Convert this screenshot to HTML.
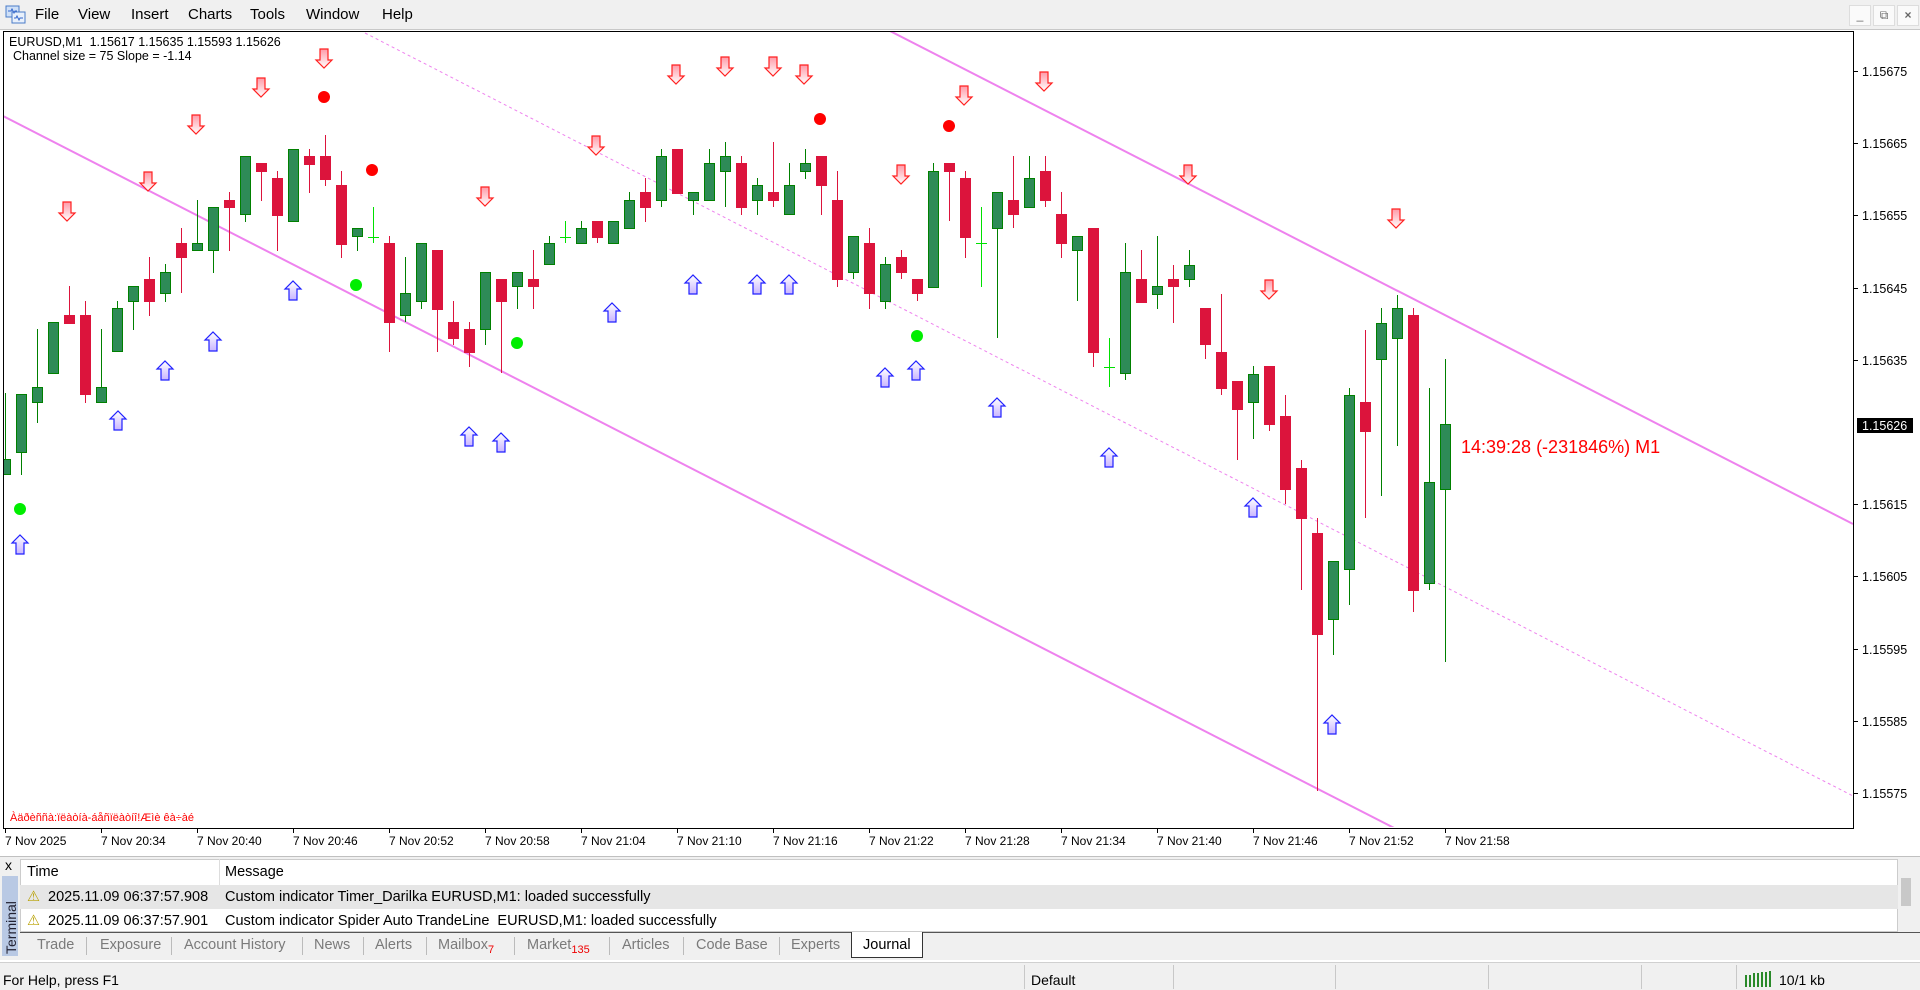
<!DOCTYPE html>
<html><head><meta charset="utf-8"><style>
*{margin:0;padding:0;box-sizing:border-box}
body{width:1920px;height:990px;overflow:hidden;background:#fff;font-family:"Liberation Sans",sans-serif;position:relative}
.abs{position:absolute}
#menu{left:0;top:0;width:1920px;height:30px;background:#f0f0f0;border-bottom:1px solid #c8c8c8}
#menu span{position:absolute;top:6px;font-size:15px;color:#000}
.wb{position:absolute;top:5px;width:22px;height:21px;background:#fafafa;border:1px solid #ddd;font-size:12px;color:#666;text-align:center;line-height:19px}
#term{left:0;top:856px;width:1920px;height:104px;background:#f0f0f0}
.tab{position:absolute;top:937px;font-size:14.5px;color:#7a7a7a}
.sep{position:absolute;top:937px;width:1px;height:18px;background:#bbb}
#status{left:0;top:962px;width:1920px;height:28px;background:#f0f0f0;border-top:1px solid #d0d0d0}
.ss{position:absolute;top:2px;width:1px;height:24px;background:#c8c8c8}
.tx{font-size:14.5px}
</style></head><body>
<div id="menu" class="abs">
<svg class="abs" style="left:5px;top:5px" width="22" height="20"><rect x="1" y="1" width="13" height="11" fill="#cfe0f7" stroke="#4a7bc8"/><rect x="7" y="7" width="13" height="11" fill="#e8f0fb" stroke="#4a7bc8"/><path d="M3 6h3l1-2 2 4 1-2h2M9 13h2l1-2 2 4 1-2h3" stroke="#3366cc" fill="none"/></svg>
<span style="left:35px">File</span><span style="left:78px">View</span><span style="left:131px">Insert</span><span style="left:188px">Charts</span><span style="left:250px">Tools</span><span style="left:306px">Window</span><span style="left:382px">Help</span>
<div class="wb" style="left:1849px">_</div><div class="wb" style="left:1873px">&#10697;</div><div class="wb" style="left:1897px;font-weight:bold">×</div>
</div>
<svg id="ch" class="abs" style="left:0;top:0" width="1920" height="856"></svg>
<div class="abs" style="left:9px;top:35px;font-size:12.5px;white-space:pre">EURUSD,M1  1.15617 1.15635 1.15593 1.15626</div>
<div class="abs" style="left:13px;top:49px;font-size:12.5px;white-space:pre">Channel size = 75 Slope = -1.14</div>
<div class="abs" style="left:1461px;top:437px;font-size:18px;color:#ff0000">14:39:28 (-231846%) M1</div>
<div class="abs" style="left:10px;top:812px;font-size:11px;color:#ff0000">Àäðèññà:ïëàòíà-áåñïëàòíî!Æìè êà÷àé</div>
<div id="term" class="abs">
<div class="abs" style="left:0;top:0;width:1920px;height:1px;background:#c0c0c0"></div>
<div class="abs" style="left:5px;top:1px;font-size:14px">x</div>
<div class="abs" style="left:2px;top:20px;width:16px;height:80px;background:#b9c9e4"></div>
<div class="abs" style="left:3px;top:98px;font-size:14px;color:#223;transform:rotate(-90deg);transform-origin:0 0;white-space:nowrap">Terminal</div>
<div class="abs" style="left:20px;top:3px;width:1878px;height:73px;background:#fff;border:1px solid #ccc"></div>
<div class="abs" style="left:20px;top:29px;width:1878px;height:24px;background:#e6e6e6"></div>
<div class="abs" style="left:219px;top:3px;width:1px;height:26px;background:#ddd"></div>
<div class="abs tx" style="left:27px;top:8px">Time</div>
<div class="abs tx" style="left:225px;top:8px">Message</div>
<div class="abs tx" style="left:27px;top:33px;color:#b8a000">⚠</div><div class="abs tx" style="left:48px;top:33px">2025.11.09 06:37:57.908</div>
<div class="abs tx" style="left:225px;top:33px">Custom indicator Timer_Darilka EURUSD,M1: loaded successfully</div>
<div class="abs tx" style="left:27px;top:57px;color:#b8a000">⚠</div><div class="abs tx" style="left:48px;top:57px">2025.11.09 06:37:57.901</div>
<div class="abs tx" style="left:225px;top:57px;white-space:pre">Custom indicator Spider Auto TrandeLine  EURUSD,M1: loaded successfully</div>
<div class="abs" style="left:1898px;top:3px;width:16px;height:73px;background:#f0f0f0"></div>
<div class="abs" style="left:1901px;top:22px;width:10px;height:28px;background:#c8c8c8"></div>
<div class="abs" style="left:20px;top:76px;width:1900px;height:1px;background:#555"></div>
</div>
<div class="tab" style="left:37px">Trade</div><div class="sep" style="left:86px"></div>
<div class="tab" style="left:100px">Exposure</div><div class="sep" style="left:171px"></div>
<div class="tab" style="left:184px">Account History</div><div class="sep" style="left:302px"></div>
<div class="tab" style="left:314px">News</div><div class="sep" style="left:363px"></div>
<div class="tab" style="left:375px">Alerts</div><div class="sep" style="left:426px"></div>
<div class="tab" style="left:438px">Mailbox<sub style="color:#e00;font-size:11px">7</sub></div><div class="sep" style="left:514px"></div>
<div class="tab" style="left:527px">Market<sub style="color:#e00;font-size:11px">135</sub></div><div class="sep" style="left:609px"></div>
<div class="tab" style="left:622px">Articles</div><div class="sep" style="left:683px"></div>
<div class="tab" style="left:696px">Code Base</div><div class="sep" style="left:779px"></div>
<div class="tab" style="left:791px">Experts</div>
<div class="abs" style="left:851px;top:932px;width:72px;height:26px;background:#fff;border:1px solid #333;border-top:none"></div>
<div class="tab" style="left:863px;color:#000">Journal</div>
<div id="status" class="abs">
<div class="abs" style="left:3px;top:9px;font-size:14px">For Help, press F1</div>
<div class="ss" style="left:1024px"></div><div class="abs" style="left:1031px;top:9px;font-size:14px">Default</div>
<div class="ss" style="left:1173px"></div><div class="ss" style="left:1335px"></div><div class="ss" style="left:1488px"></div><div class="ss" style="left:1641px"></div><div class="ss" style="left:1736px"></div>
<svg class="abs" style="left:1745px;top:8px" width="30" height="16"><g fill="#2a8a2a"><rect x="0" y="4" width="2" height="12"/><rect x="4" y="4" width="2" height="12"/><rect x="8" y="2" width="2" height="14"/><rect x="12" y="2" width="2" height="14"/><rect x="16" y="1" width="2" height="15"/><rect x="20" y="1" width="2" height="15"/><rect x="24" y="0" width="2" height="16"/></g></svg>
<div class="abs" style="left:1779px;top:9px;font-size:14px">10/1 kb</div>
</div>
<script>
var C=[["g",459,474,393,474],["g",394,452,394,475],["g",387,402,329,423],["g",322,373,322,373],["r",315,323,286,323],["r",315,394,301,403],["g",387,402,329,402],["g",308,351,301,351],["g",286,301,286,330],["r",279,301,257,316],["g",272,293,264,302],["r",243,257,228,293],["g",243,250,200,250],["g",207,250,207,273],["r",200,207,192,251],["g",156,214,156,222],["r",163,171,163,201],["r",178,215,171,251],["g",149,221,149,221],["r",156,164,149,193],["r",156,179,135,186],["r",185,244,171,258],["g",228,236,228,251],["d",237,237,207,243],["r",243,322,236,352],["g",293,315,257,322],["g",243,301,243,309],["r",250,309,250,352],["r",322,338,301,345],["r",329,352,322,367],["g",272,329,272,345],["r",279,301,279,373],["g",272,286,272,309],["r",279,286,250,309],["g",243,264,236,264],["d",237,237,221,243],["g",228,243,221,243],["r",221,237,221,243],["g",221,243,221,243],["g",200,228,192,228],["r",192,207,178,222],["g",156,200,149,207],["r",149,193,149,193],["g",192,200,192,215],["g",163,200,149,200],["g",156,171,142,207],["r",163,207,156,215],["g",185,200,178,215],["r",192,200,142,207],["g",185,214,163,214],["g",163,171,149,179],["r",156,185,156,215],["r",200,279,171,287],["g",236,272,236,279],["r",243,293,228,309],["g",264,301,257,309],["r",257,272,250,279],["r",279,293,279,301],["g",171,287,163,287],["r",163,171,163,221],["r",178,237,171,258],["d",243,243,207,287],["g",192,228,192,338],["r",200,214,156,228],["g",178,207,156,207],["r",171,200,156,207],["r",214,243,192,258],["g",236,250,236,301],["r",228,352,228,367],["d",367,367,338,387],
["g",272,373,243,380],["r",279,302,250,302],["g",286,294,236,309],["r",279,286,265,323],["g",265,279,250,287],["r",308,344,308,359],["r",352,388,294,395],["r",381,409,381,460],["g",374,402,366,439],["r",366,424,366,431],["r",416,489,395,504],["r",468,518,460,590],["r",533,634,518,791],["g",561,619,561,655],["g",395,569,388,605],["r",402,431,330,518],["g",323,359,308,496],["g",308,338,295,446],["r",315,590,308,612],["g",482,583,388,590],["g",424,489,359,662]];
var s='<defs><linearGradient id="dg" x1="0" y1="0" x2="0" y2="1"><stop offset="0" stop-color="#ff9aa8"/><stop offset="1" stop-color="#fff"/></linearGradient><linearGradient id="ug" x1="0" y1="0" x2="0" y2="1"><stop offset="0" stop-color="#fff"/><stop offset="1" stop-color="#c9b5ff"/></linearGradient><clipPath id="cp"><rect x="4" y="32" width="1849" height="795"/></clipPath></defs>';
s+='<rect x="3.5" y="31.5" width="1850" height="797" fill="#fff" stroke="#000"/>';
s+='<g clip-path="url(#cp)">';
s+='<line x1="3" y1="116" x2="1400" y2="831" stroke="#ee82ee" stroke-width="2"/>';
s+='<line x1="890" y1="31" x2="1853" y2="524" stroke="#ee82ee" stroke-width="2"/>';
s+='<line x1="365" y1="33" x2="1853" y2="796" stroke="#ee82ee" stroke-width="1" stroke-dasharray="3,3"/>';
for(var i=0;i<C.length;i++){var c=C[i],x=5+16*i;
 if(c[0]=="d"){s+='<line x1="'+x+'.5" y1="'+c[3]+'" x2="'+x+'.5" y2="'+c[4]+'" stroke="#00e000"/><line x1="'+(x-5)+'" y1="'+c[1]+'.5" x2="'+(x+6)+'" y2="'+c[1]+'.5" stroke="#00e000"/>';continue;}
 var col=c[0]=="g"?"#008000":"#dc143c",f=c[0]=="g"?"#2e8b57":"#dc143c";
 s+='<line x1="'+x+'.5" y1="'+c[3]+'" x2="'+x+'.5" y2="'+c[4]+'" stroke="'+col+'"/>';
 s+='<rect x="'+(x-5)+'.5" y="'+c[1]+'.5" width="10" height="'+Math.max(1,c[2]-c[1])+'" fill="'+f+'" stroke="'+col+'"/>';}
function dn(x,y){return '<path d="M'+(x-4)+' '+y+'h8v11h4l-8 8-8-8h4z" fill="url(#dg)" stroke="#ff2020" stroke-width="1.2"/>';}
function up(x,y){return '<path d="M'+(x-4)+' '+(y+19)+'h8v-11h4l-8-8-8 8h4z" fill="url(#ug)" stroke="#2020ff" stroke-width="1.2"/>';}
var D=[[55,173],[121,149],[160,102],[213,72],[265,48],[396,161],[487,119],[552,61],[592,55],[631,55],[657,61],[736,143],[787,78],[853,67],[970,143],[1036,237],[1140,179]];
var U=[[16,445],[96,344],[135,303],[174,279],[239,238],[383,357],[409,362],[500,256],[566,233],[618,233],[644,233],[723,309],[748,303],[814,333],[906,374],[1023,415],[1088,592]];
var k=1.2245;
D.forEach(function(p){s+=dn(Math.round(p[0]*k),Math.round(p[1]*k)-10);});
U.forEach(function(p){s+=up(Math.round(p[0]*k),Math.round(p[1]*k)-10);});
[[265,79],[304,139],[670,97],[775,103]].forEach(function(p){s+='<circle cx="'+Math.round(p[0]*k)+'" cy="'+Math.round(p[1]*k)+'" r="6" fill="#ff0000"/>';});
[[16,416],[291,233],[422,280],[749,274]].forEach(function(p){s+='<circle cx="'+Math.round(p[0]*k)+'" cy="'+Math.round(p[1]*k)+'" r="6" fill="#00ee00"/>';});
s+='</g>';
var pr=["1.15675","1.15665","1.15655","1.15645","1.15635","1.15625","1.15615","1.15605","1.15595","1.15585","1.15575"];
for(var j=0;j<11;j++){var y=Math.round(71+72.2*j);if(j==5)continue;s+='<line x1="1853" y1="'+y+'.5" x2="1858" y2="'+y+'.5" stroke="#000"/><text x="1862" y="'+(y+5)+'" font-family="Liberation Sans" font-size="12.5">'+pr[j]+'</text>';}
s+='<rect x="1857" y="418" width="56" height="15" fill="#000"/><text x="1862" y="430" fill="#fff" font-family="Liberation Sans" font-size="12.5">1.15626</text>';
var tl=["7 Nov 2025","7 Nov 20:34","7 Nov 20:40","7 Nov 20:46","7 Nov 20:52","7 Nov 20:58","7 Nov 21:04","7 Nov 21:10","7 Nov 21:16","7 Nov 21:22","7 Nov 21:28","7 Nov 21:34","7 Nov 21:40","7 Nov 21:46","7 Nov 21:52","7 Nov 21:58"];
for(var j=0;j<tl.length;j++){var x=5+96*j;s+='<line x1="'+x+'.5" y1="828" x2="'+x+'.5" y2="833" stroke="#000"/><text x="'+x+'" y="845" font-family="Liberation Sans" font-size="12">'+tl[j]+'</text>';}
document.getElementById('ch').innerHTML=s;
</script>
</body></html>
